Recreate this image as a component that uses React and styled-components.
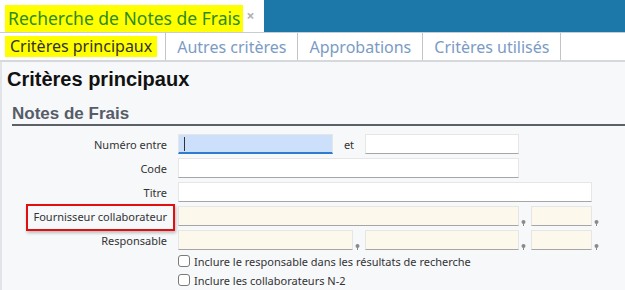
import styled, { createGlobalStyle } from "styled-components";

const GlobalStyle = createGlobalStyle`
  html, body {
    margin: 0;
    padding: 0;
    background: #f7f8fa;
    font-family: "Noto Sans", "Open Sans", sans-serif;
  }
`;

const Page = styled.div`
  width: 625px;
  height: 290px;
  overflow: hidden;
  display: flex;
  flex-direction: column;
`;

const TopBar = styled.div`
  display: flex;
  height: 32px;
  background: #1b78a8;
  border-bottom: 1px solid #c9ced4;
`;

const DocTab = styled.div`
  display: flex;
  align-items: flex-end;
  width: 264px;
  padding-left: 5px;
  background: #fff;
  box-sizing: border-box;
`;

const Highlight = styled.span`
  background: #ffff00;
  color: ${(p) => p.$color || "#333"};
  padding: ${(p) => p.$pad || "0 4px"};
  line-height: ${(p) => p.$lh || "normal"};
`;

const DocTitle = styled(Highlight)`
  font-size: 17.5px;
`;

const Close = styled.span`
  align-self: center;
  margin-left: 3px;
  color: #b0b0b0;
  font-size: 14px;
  font-weight: bold;
  margin-top: -2px;
`;

const TabRow = styled.div`
  display: flex;
  height: 27px;
  background: #fff;
  border-bottom: 2px solid #d6d8db;
`;

const Tab = styled.div`
  display: flex;
  align-items: center;
  padding: ${(p) => (p.$active ? "0 8px 0 5px" : "0 11px")};
  border-right: 1px solid #c4c4c4;
  font-size: 16px;
  color: #7b9bc4;
`;

const Content = styled.div`
  flex: 1;
  border-left: 2px solid #e2e4e7;
  padding: 5px 0 0 5px;
`;

const PageTitle = styled.h1`
  margin: 0;
  font-family: "Liberation Sans", Arial, sans-serif;
  font-size: 20px;
  font-weight: bold;
  color: #111;
  line-height: 24px;
`;

const Section = styled.div`
  margin: 12px 0 0 5px;
`;

const SectionTitle = styled.h2`
  margin: 0;
  font-family: "Liberation Sans", Arial, sans-serif;
  font-size: 17px;
  font-weight: bold;
  color: #555d68;
  line-height: 21px;
  border-bottom: 2px solid #5c6168;
  padding-bottom: 0;
`;

const Form = styled.div`
  display: flex;
  flex-direction: column;
  gap: 4px;
  margin-top: 8px;
`;

const Row = styled.div`
  display: flex;
  align-items: flex-end;
  height: 20px;
`;

const Label = styled.div`
  width: 166px;
  height: 20px;
  box-sizing: border-box;
  padding-right: 11px;
  display: flex;
  align-items: center;
  justify-content: flex-end;
  font-size: 11px;
  color: #333;
  position: relative;
`;

const RedBox = styled.span`
  position: absolute;
  left: 14px;
  right: 3px;
  top: -2px;
  bottom: -5px;
  border: 2px solid #e01010;
  box-shadow: 1px 2px 3px rgba(0, 0, 0, 0.25);
`;

const Field = styled.div`
  width: ${(p) => p.$w}px;
  height: 20px;
  box-sizing: border-box;
  background: ${(p) => (p.$focus ? "#cce0fb" : p.$cream ? "#fdf8ec" : "#fff")};
  border: 1px solid #e6e6e6;
  border-bottom: ${(p) => (p.$focus ? "2px solid #2e7bd0" : "1px solid #a6a6a6")};
  display: flex;
  align-items: center;
  padding-left: 5px;
`;

const Caret = styled.span`
  width: 1px;
  height: 14px;
  background: #333;
`;

const Et = styled.span`
  width: 32px;
  height: 20px;
  display: flex;
  align-items: center;
  justify-content: center;
  font-size: 11px;
  color: #333;
`;

const PinSlot = styled.span`
  width: 12px;
  box-sizing: border-box;
  padding-left: 2px;
  display: flex;
`;

const Pin = () => (
  <PinSlot>
    <svg width="5" height="6" viewBox="0 0 5 6">
      <circle cx="2.5" cy="2" r="2" fill="#8a8a8a" />
      <rect x="2" y="3" width="1" height="3" fill="#8a8a8a" />
    </svg>
  </PinSlot>
);

const Checks = styled.div`
  display: flex;
  flex-direction: column;
  gap: 5px;
  margin: 4px 0 0 166px;
`;

const CheckRow = styled.label`
  display: flex;
  align-items: center;
  gap: 4px;
  font-size: 11px;
  color: #333;
  height: 14px;
`;

const Box = styled.span`
  width: 12px;
  height: 12px;
  box-sizing: border-box;
  border: 1px solid #7a7a7a;
  border-radius: 3px;
  background: #fff;
`;

export default function App() {
  return (
    <Page>
      <GlobalStyle />
      <TopBar>
        <DocTab>
          <DocTitle $color="#2f8a1f" $lh="27px" $pad="0 3px">
            Recherche de Notes de Frais
          </DocTitle>
          <Close>×</Close>
        </DocTab>
      </TopBar>
      <TabRow>
        <Tab $active>
          <Highlight $lh="21px" $pad="0 5px">Critères principaux</Highlight>
        </Tab>
        <Tab>Autres critères</Tab>
        <Tab>Approbations</Tab>
        <Tab>Critères utilisés</Tab>
      </TabRow>
      <Content>
        <PageTitle>Critères principaux</PageTitle>
        <Section>
          <SectionTitle>Notes de Frais</SectionTitle>
          <Form>
            <Row>
              <Label>Numéro entre</Label>
              <Field $w={155} $focus>
                <Caret />
              </Field>
              <Et>et</Et>
              <Field $w={154} />
            </Row>
            <Row>
              <Label>Code</Label>
              <Field $w={341} />
            </Row>
            <Row>
              <Label>Titre</Label>
              <Field $w={414} />
            </Row>
            <Row>
              <Label>
                <RedBox />
                Fournisseur collaborateur
              </Label>
              <Field $w={341} $cream />
              <Pin />
              <Field $w={61} $cream />
              <Pin />
            </Row>
            <Row>
              <Label>Responsable</Label>
              <Field $w={175} $cream />
              <Pin />
              <Field $w={154} $cream />
              <Pin />
              <Field $w={61} $cream />
              <Pin />
            </Row>
          </Form>
          <Checks>
            <CheckRow>
              <Box />
              Inclure le responsable dans les résultats de recherche
            </CheckRow>
            <CheckRow>
              <Box />
              Inclure les collaborateurs N-2
            </CheckRow>
          </Checks>
        </Section>
      </Content>
    </Page>
  );
}
